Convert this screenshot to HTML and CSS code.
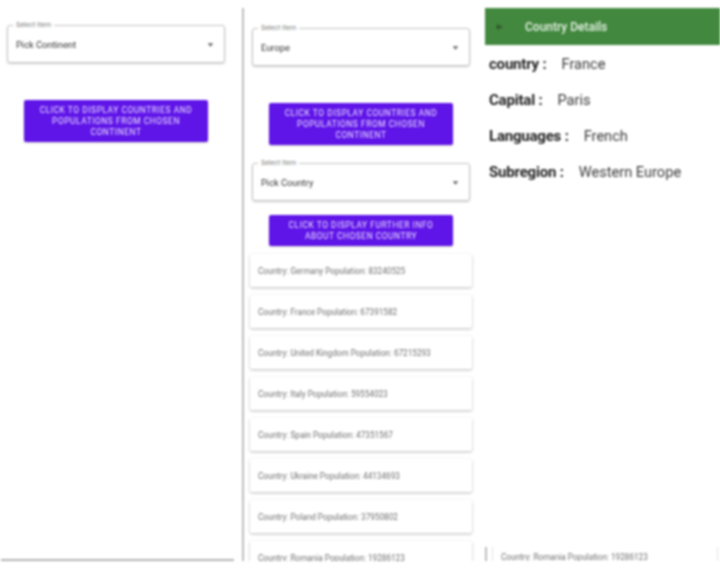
FILE: index.html
```html
<!DOCTYPE html>
<html lang="en">
<head>
<meta charset="utf-8">
<title>Country Details</title>
<link rel="stylesheet" href="styles.css">
</head>
<body>
<div class="app">
  <section class="screen first">
    <div class="select">
      <span class="legend">Select Item</span>
      <span class="value">Pick Continent</span>
      <svg class="caret" viewBox="0 0 10 5"><path d="M1 0h8L5 5z"/></svg>
    </div>
    <button class="btn tall">Click to display countries and populations from chosen continent</button>
  </section>
  <section class="screen second">
    <div class="select">
      <span class="legend">Select Item</span>
      <span class="value">Europe</span>
      <svg class="caret" viewBox="0 0 10 5"><path d="M1 0h8L5 5z"/></svg>
    </div>
    <button class="btn tall">Click to display countries and populations from chosen continent</button>
    <div class="select country">
      <span class="legend">Select Item</span>
      <span class="value">Pick Country</span>
      <svg class="caret" viewBox="0 0 10 5"><path d="M1 0h8L5 5z"/></svg>
    </div>
    <button class="btn short">Click to display further info about chosen country</button>
    <ul class="list">
      <li class="card">Country: Germany Population: 83240525</li>
      <li class="card">Country: France Population: 67391582</li>
      <li class="card">Country: United Kingdom Population: 67215293</li>
      <li class="card">Country: Italy Population: 59554023</li>
      <li class="card">Country: Spain Population: 47351567</li>
      <li class="card">Country: Ukraine Population: 44134693</li>
      <li class="card">Country: Poland Population: 37950802</li>
      <li class="card">Country: Romania Population: 19286123</li>
    </ul>
  </section>
  <section class="screen third">
    <header class="bar">
      <svg class="back" viewBox="0 0 10 10"><path d="M9 4.2H3.6l2-2-.8-.8L1.2 5l3.6 3.6.8-.8-2-2H9z"/></svg>
      <span class="title">Country Details</span>
    </header>
    <dl class="facts">
      <div class="fact"><dt>country :</dt><dd>France</dd></div>
      <div class="fact"><dt>Capital :</dt><dd>Paris</dd></div>
      <div class="fact"><dt>Languages :</dt><dd>French</dd></div>
      <div class="fact"><dt>Subregion :</dt><dd>Western Europe</dd></div>
    </dl>
    <div class="peek">
      <span class="peek-card">Country: Romania Population: 19286123</span>
    </div>
  </section>
</div>
</body>
</html>
```
FILE: styles.css
```css
* { box-sizing: border-box; }
html, body { margin: 0; padding: 0; background: #fff; }
body { width: 720px; height: 570px; overflow: hidden; font-family: Roboto, "Liberation Sans", sans-serif; }

.app {
  display: flex;
  height: 561px;
  padding-top: 8px;
  filter: blur(0.8px);
}
.screen { height: 553px; overflow: hidden; display: flex; flex-direction: column; flex: none; }

.first { width: 233px; margin-left: 1px; padding: 17px 9px 0 6px; border-bottom: 2px solid #b4b4b4; }
.second { width: 243px; margin-left: 8px; padding: 20px 0 0 9px; border-left: 2px solid #bdbdbd; }
.third { width: 235px; }

.select {
  position: relative;
  width: 218px;
  height: 38px;
  border: 1px solid #c4c4c4;
  border-radius: 3px;
  box-shadow: 0 1px 2px rgba(0,0,0,.2);
  display: flex;
  align-items: center;
  padding-left: 8px;
  flex: none;
}
.second .select { margin-left: -1px; }
.legend {
  position: absolute;
  left: 5px;
  top: -5px;
  padding: 0 3px;
  background: #fff;
  font-size: 7px;
  line-height: 9px;
  color: #808080;
}
.value { font-size: 9.3px; color: #333; padding-top: 1px; }
.caret { position: absolute; right: 10px; top: 17px; width: 7px; height: 4px; fill: #666; }

.btn {
  display: block;
  flex: none;
  width: 184px;
  border: 0;
  border-radius: 2px;
  background: #5f14e8;
  color: #eee6fd;
  font-family: Roboto, "Liberation Sans", sans-serif;
  font-size: 8.4px;
  font-weight: 400;
  line-height: 11px;
  letter-spacing: .55px;
  text-transform: uppercase;
  text-align: center;
  padding: 0 8px;
  box-shadow: 0 1px 2px rgba(0,0,0,.2);
}
.btn.tall { height: 42px; margin: 37px 0 0 17px; }
.second .btn.tall { margin-left: 16px; }
.select.country { margin-top: 18px; }
.btn.short { height: 31px; margin: 14px 0 0 16px; padding: 0 14px; }

.list { list-style: none; margin: 8px 0 0 -3px; padding: 0; width: 222px; display: flex; flex-direction: column; gap: 8px; }
.card {
  height: 33px;
  flex: none;
  padding: 0 8px;
  display: flex;
  align-items: center;
  font-size: 8.2px;
  color: #707070;
  background: #fff;
  border-radius: 2px;
  box-shadow: 0 1px 3px rgba(0,0,0,.28);
}

.bar {
  flex: none;
  height: 37px;
  background: #43883f;
  display: flex;
  align-items: center;
  color: #e6f2e6;
  padding-left: 10px;
}
.back { width: 8px; height: 8px; fill: #2c4a2a; margin-right: 22px; }
.title { font-size: 12px; font-weight: 500; }

.facts { margin: 0; padding: 0 0 0 4px; flex: none; }
.fact { display: flex; align-items: center; height: 36px; font-size: 14.6px; color: #3a3a3a; }
.fact:first-child { margin-top: 1px; }
.fact dt { font-size: 15px; font-weight: 700; color: #222; margin-right: 15px; letter-spacing: -.2px; }
.fact dd { margin: 0; }

.peek {
  margin-top: auto;
  height: 14px;
  display: flex;
  align-items: center;
  border-left: 2px solid #bdbdbd;
  padding-left: 5px;
}
.peek-card {
  flex: 1;
  height: 14px;
  border-left: 1px solid #e6e6e6;
  border-right: 1px solid #e6e6e6;
  padding-left: 8px;
  margin-right: 2px;
  font-size: 8.2px;
  line-height: 20px;
  color: #707070;
}
```
